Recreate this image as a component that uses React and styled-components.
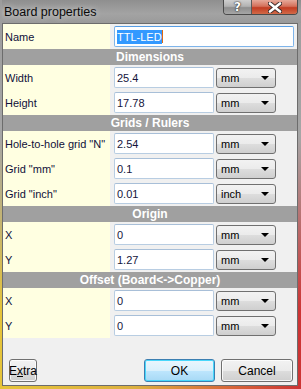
import React from "react";
import styled, { createGlobalStyle } from "styled-components";

const GlobalStyle = createGlobalStyle`
  html, body {
    margin: 0;
    padding: 0;
    background: #fff;
  }
  * {
    box-sizing: border-box;
  }
`;

const sections = [
  {
    title: "Dimensions",
    rows: [
      { label: "Width", value: "25.4", unit: "mm" },
      { label: "Height", value: "17.78", unit: "mm" },
    ],
  },
  {
    title: "Grids / Rulers",
    rows: [
      { label: 'Hole-to-hole grid "N"', value: "2.54", unit: "mm" },
      { label: 'Grid "mm"', value: "0.1", unit: "mm" },
      { label: 'Grid "inch"', value: "0.01", unit: "inch" },
    ],
  },
  {
    title: "Origin",
    rows: [
      { label: "X", value: "0", unit: "mm" },
      { label: "Y", value: "1.27", unit: "mm" },
    ],
  },
  {
    title: "Offset (Board<->Copper)",
    rows: [
      { label: "X", value: "0", unit: "mm" },
      { label: "Y", value: "0", unit: "mm" },
    ],
  },
];

const BoardProperties = () => {
  return (
    <Window>
      <TitleBar>
        <Caption>Board properties</Caption>
        <CaptionButtons>
          <HelpButton>?</HelpButton>
          <CloseButton>
            <svg width="14" height="11" viewBox="0 0 14 11">
              <path
                d="M2 1.5 L12 9.5 M12 1.5 L2 9.5"
                stroke="#3a2a2a"
                strokeWidth="4.4"
                strokeLinecap="round"
              />
              <path
                d="M2 1.5 L12 9.5 M12 1.5 L2 9.5"
                stroke="#fff"
                strokeWidth="2.6"
                strokeLinecap="round"
              />
            </svg>
          </CloseButton>
        </CaptionButtons>
      </TitleBar>

      <Client>
        <Grid>
          <LabelCell>Name</LabelCell>
          <ValueCell>
            <Field wide focused>
              <Selected>TTL-LED</Selected>
              <Caret />
            </Field>
          </ValueCell>

          {sections.map((section) => (
            <React.Fragment key={section.title}>
              <SectionHeader>{section.title}</SectionHeader>
              {section.rows.map((row, i) => (
                <React.Fragment key={section.title + i}>
                  <LabelCell>{row.label}</LabelCell>
                  <ValueCell>
                    <Field>{row.value}</Field>
                    <Combo>
                      {row.unit}
                      <Arrow />
                    </Combo>
                  </ValueCell>
                </React.Fragment>
              ))}
            </React.Fragment>
          ))}
        </Grid>

        <Footer>
          <Button width={28}>
            E<u>x</u>tra
          </Button>
          <Spacer />
          <Button width={71} primary>
            OK
          </Button>
          <Button width={72}>Cancel</Button>
        </Footer>
      </Client>
    </Window>
  );
};

export default function App() {
  return (
    <>
      <GlobalStyle />
      <BoardProperties />
    </>
  );
}

const Window = styled.div`
  width: 301px;
  height: 389px;
  display: flex;
  flex-direction: column;
  padding: 0 3px 3px 2px;
  background:
    linear-gradient(to bottom, #9c9c9c 0%, #a6a6a6 35%, rgba(170, 160, 140, 0) 80%),
    linear-gradient(to right, #e6c43a 0%, #dcb040 45%, #d86a3a 75%, #cc3434 100%);
  font-family: "Liberation Sans", Arial, sans-serif;
`;

const TitleBar = styled.div`
  height: 23px;
  display: flex;
  justify-content: space-between;
  align-items: flex-start;
  margin-right: -3px;
  background: linear-gradient(to bottom, #8f8f8f, #a3a3a3 60%, #9a9a9a);
`;

const Caption = styled.div`
  padding: 5px 0 0 2px;
  font: 12.5px "Liberation Sans", Arial, sans-serif;
  color: #0a0a0a;
  text-shadow: 0 0 6px rgba(255, 255, 255, 0.7);
`;

const CaptionButtons = styled.div`
  display: flex;
  margin-right: 3px;
  border: 1px solid #4a4a4a;
  border-top: none;
  border-radius: 0 0 4px 4px;
  overflow: hidden;
`;

const HelpButton = styled.div`
  width: 28px;
  height: 14px;
  display: flex;
  align-items: center;
  justify-content: center;
  border-right: 1px solid #5a5a5a;
  background: linear-gradient(to bottom, #cfcfcf 0%, #b2b2b2 45%, #8e8e8e 55%, #a6a6a6 100%);
  color: #fff;
  font: bold 12px "DejaVu Sans", sans-serif;
  text-shadow: 0 0 1px #222, 0 0 2px #222;
`;

const CloseButton = styled.div`
  width: 45px;
  height: 14px;
  display: flex;
  align-items: center;
  justify-content: center;
  background: linear-gradient(to bottom, #e6a99a 0%, #d4705a 45%, #c23c22 55%, #d26a48 100%);
`;

const Client = styled.div`
  flex: 1;
  display: flex;
  flex-direction: column;
  border: 1px solid #6c6c6c;
  background: #f0f0f0;
`;

const Grid = styled.div`
  display: grid;
  grid-template-columns: 107px 1fr;
`;

const LabelCell = styled.div`
  height: 25px;
  display: flex;
  align-items: center;
  padding-left: 2px;
  background: #ffffe1;
  color: #10103a;
  font-size: 11px;
`;

const ValueCell = styled.div`
  height: 25px;
  display: flex;
  align-items: flex-start;
  gap: 2px;
  padding: 2px 0 0 4px;
`;

const SectionHeader = styled.div`
  grid-column: 1 / -1;
  height: 16px;
  display: flex;
  align-items: center;
  justify-content: center;
  background: #a0a0a0;
  color: #fff;
  font-size: 12px;
  font-weight: bold;
`;

const Field = styled.div`
  width: ${(p) => (p.wide ? "180px" : "100px")};
  height: 21px;
  display: flex;
  align-items: center;
  padding-left: 2px;
  background: #fff;
  border: 1px solid ${(p) => (p.focused ? "#7eb4ea" : "#b8cde2")};
  border-top-color: ${(p) => (p.focused ? "#569de5" : "#a8bfd8")};
  border-radius: 2px;
  color: #14143c;
  font-size: 11px;
`;

const Selected = styled.span`
  background: #3399ff;
  color: #fff;
  padding: 1px 0;
`;

const Caret = styled.span`
  width: 1px;
  height: 13px;
  background: #e06a10;
`;

const Combo = styled.div`
  position: relative;
  width: 60px;
  height: 20px;
  display: flex;
  align-items: center;
  padding-left: 4px;
  margin-top: 1px;
  border: 1px solid #707070;
  border-radius: 3px;
  background: linear-gradient(to bottom, #f2f2f2 0%, #ebebeb 50%, #dddddd 51%, #cfcfcf 100%);
  color: #000;
  font-size: 11px;
`;

const Arrow = styled.span`
  position: absolute;
  right: 6px;
  top: 7px;
  width: 0;
  height: 0;
  border-left: 4px solid transparent;
  border-right: 4px solid transparent;
  border-top: 4px solid #000;
`;

const Footer = styled.div`
  flex: 1;
  display: flex;
  align-items: flex-end;
  gap: 6px;
  padding: 0 4px 3px 6px;
`;

const Spacer = styled.div`
  flex: 1;
`;

const Button = styled.div`
  width: ${(p) => p.width}px;
  height: 23px;
  display: flex;
  align-items: center;
  justify-content: center;
  border: 1px solid ${(p) => (p.primary ? "#3c7fb1" : "#707070")};
  border-radius: 3px;
  background: ${(p) =>
    p.primary
      ? "linear-gradient(to bottom, #eaf6fd 0%, #d9f0fc 50%, #bee6fd 51%, #a7d9f5 100%)"
      : "linear-gradient(to bottom, #f2f2f2 0%, #ebebeb 50%, #dddddd 51%, #cfcfcf 100%)"};
  box-shadow: ${(p) =>
    p.primary ? "inset 0 0 0 1px #48d7fb" : "inset 0 0 0 1px rgba(255,255,255,0.8)"};
  color: #000;
  font-size: 12px;
`;
